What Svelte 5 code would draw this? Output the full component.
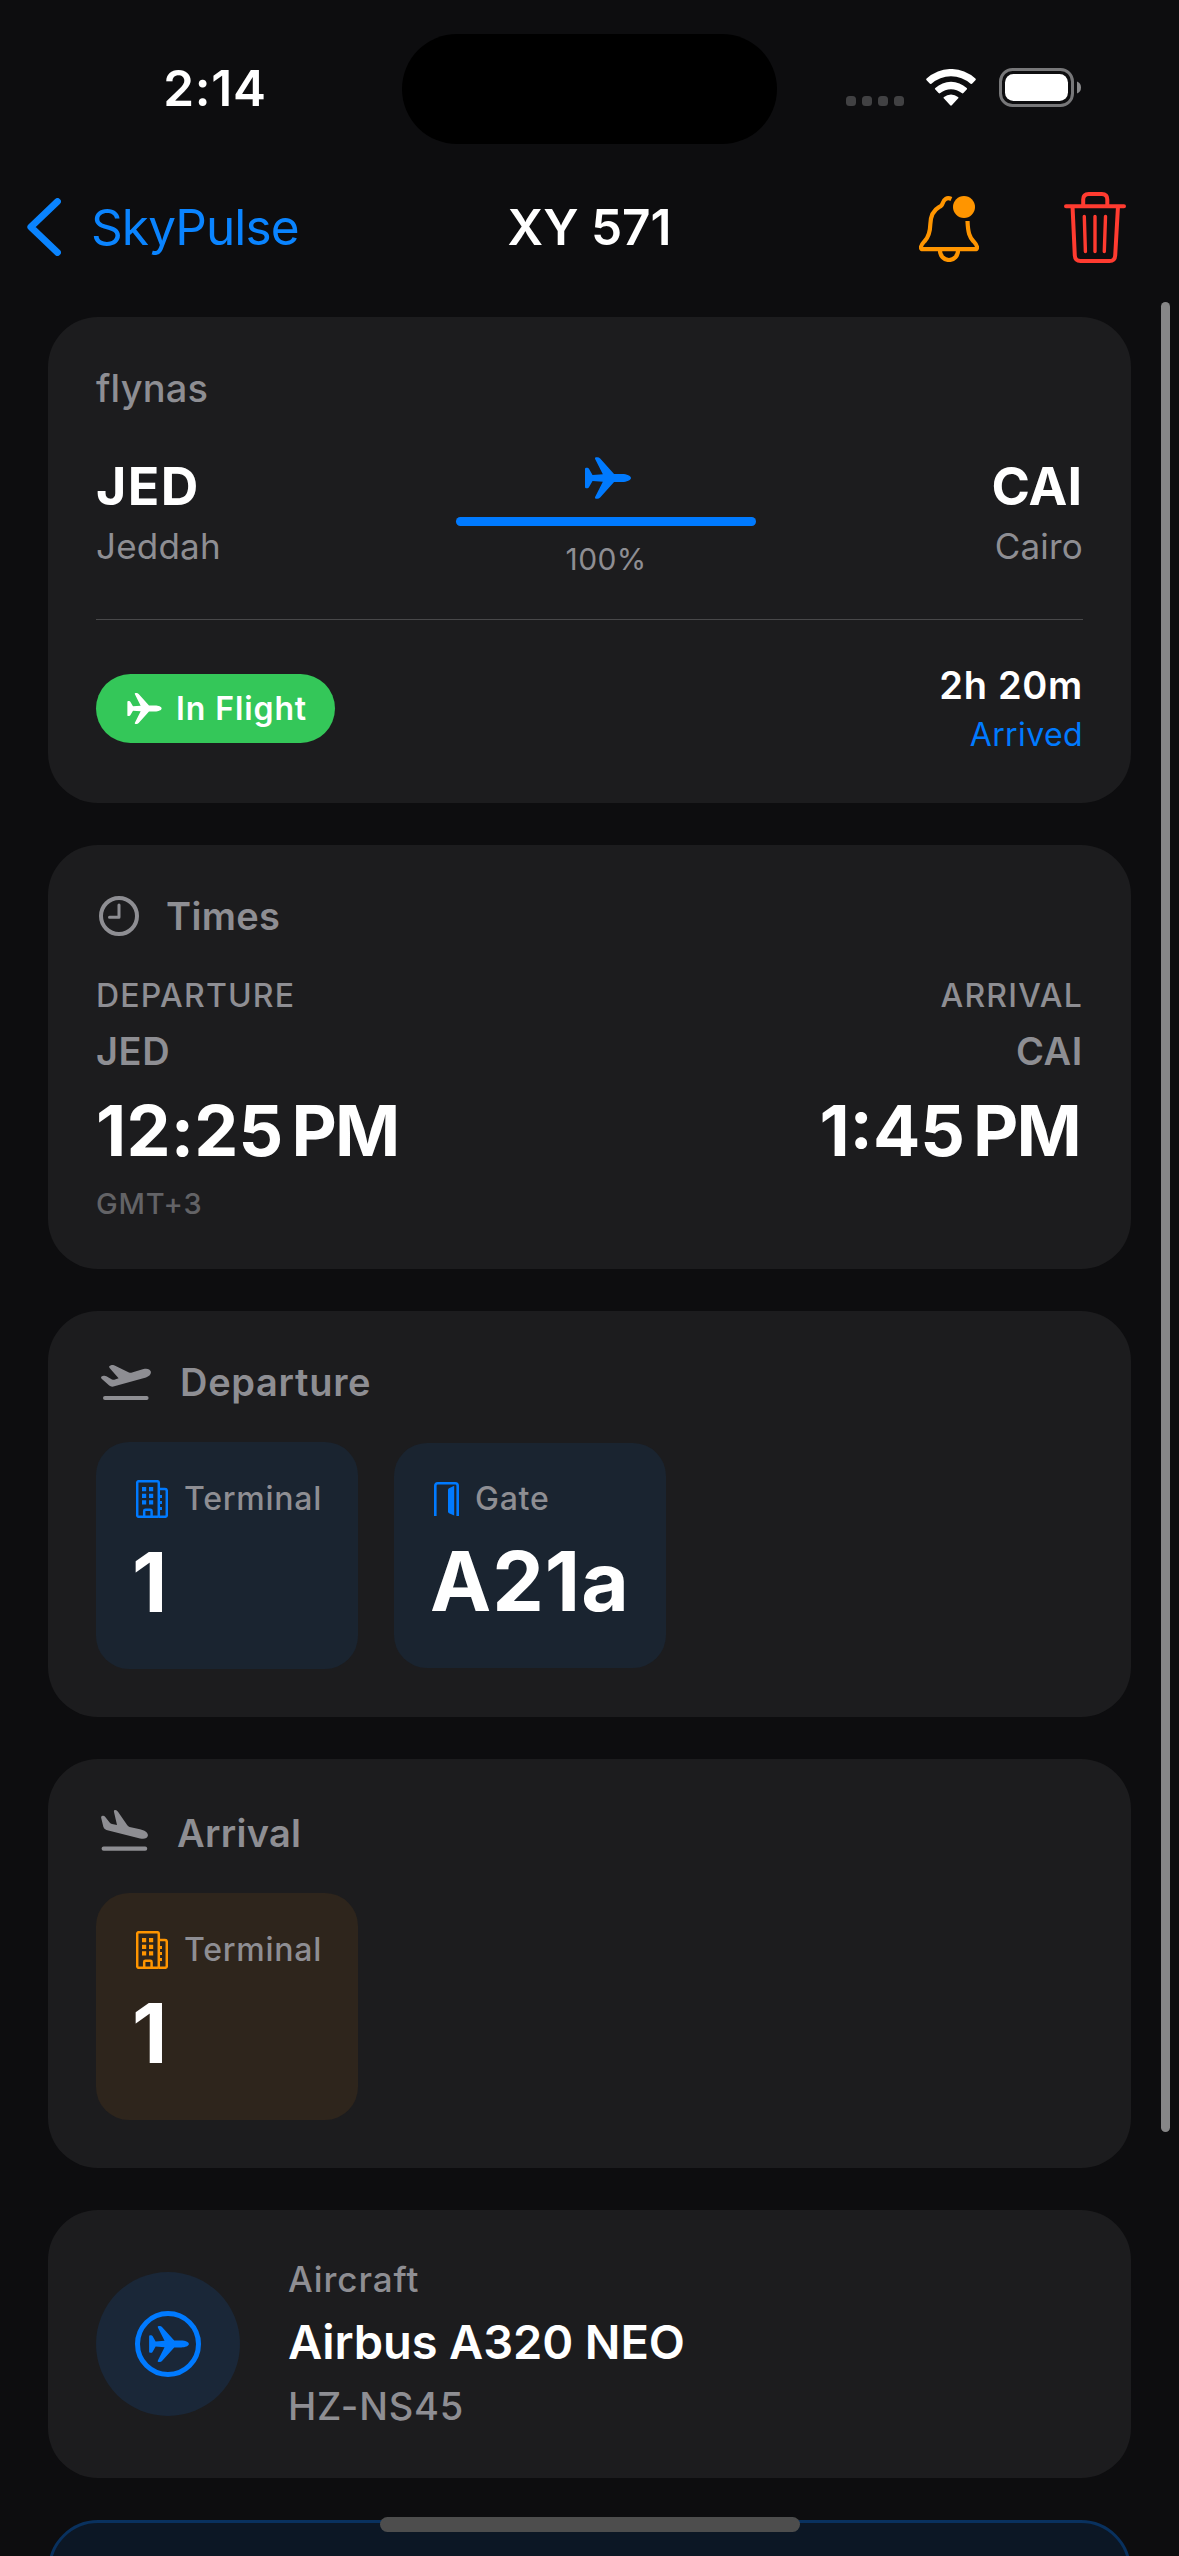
<script lang="ts">
  /**
   * Flight detail screen: route summary, times, terminals and aircraft
   */

  interface Tile {
    icon: 'building' | 'door';
    label: string;
    value: string;
  }

  const flight = {
    number: 'XY 571',
    airline: 'flynas',
    from: { code: 'JED', city: 'Jeddah' },
    to: { code: 'CAI', city: 'Cairo' },
    progress: 100,
    status: 'In Flight',
    duration: '2h 20m',
    note: 'Arrived'
  };

  const aircraft = { type: 'Airbus A320 NEO', registration: 'HZ-NS45' };

  const departureTiles: Tile[] = [
    { icon: 'building', label: 'Terminal', value: '1' },
    { icon: 'door', label: 'Gate', value: 'A21a' }
  ];

  const arrivalTiles: Tile[] = [{ icon: 'building', label: 'Terminal', value: '1' }];
</script>

{#snippet plane(cls: string)}
  <svg class={cls} viewBox="0 0 46.4 42" fill="currentColor" aria-hidden="true">
    <path
      d="M0 12Q0 10.7 1.2 10.7H2.4Q3.4 10.7 4 11.7L7.6 18L18 17.2L10.2 1.8Q9.4 0 11.2 0H12.4Q14 0 15.3 1.4L29.3 17H37.5C42 17 46.4 18.8 46.4 21S42 25 37.5 25H29.3L15.3 40.6Q14 42 12.4 42H11.2Q9.4 42 10.2 40.2L18 24.8L7.6 24L4 30.3Q3.4 31.3 2.4 31.3H1.2Q0 31.3 0 30Z"
    />
  </svg>
{/snippet}

{#snippet tile(item: Tile)}
  <div class="tile" class:gate={item.icon === 'door'}>
    <div class="tile-head">
      {#if item.icon === 'building'}
        <svg class="building" viewBox="0 0 32 38" fill="none" stroke="currentColor" stroke-width="2.5" aria-hidden="true">
          <rect x="1.2" y="1.2" width="21.6" height="35.6" rx="1.6" />
          <path d="M22.6 9H29Q30.8 9 30.8 11V35Q30.8 36.8 29 36.8H22.6M8.2 37V31Q8.2 29.8 9.4 29.8H14.4Q15.6 29.8 15.6 31V37" />
          <path
            fill="currentColor"
            stroke="none"
            d="M6 7h4.2v4.2H6zM13 7h4.2v4.2H13zM6 13.8h4.2V18H6zM13 13.8h4.2V18H13zM6 20.2h4.2v4.2H6zM13 20.2h4.2v4.2H13zM23 15h3v3h-3zM23 21h3v3h-3zM23 27h3v3h-3z"
          />
        </svg>
      {:else}
        <svg class="door" viewBox="0 0 25 34" aria-hidden="true">
          <path d="M1.3 34V3.8Q1.3 1.3 3.8 1.3H21.2Q23.7 1.3 23.7 3.8V34" fill="none" stroke="currentColor" stroke-width="2.6" />
          <path d="M14 8Q14 6.8 15 6.3L20.2 3.8V33.4L15 31.2Q14 30.7 14 29.5Z" fill="currentColor" />
        </svg>
      {/if}
      <span class="tile-label">{item.label}</span>
    </div>
    <div class="tile-value">{item.value}</div>
  </div>
{/snippet}

<div class="screen">
  <header class="status-bar">
    <div class="clock">2:14</div>
    <div class="island"></div>
    <div class="indicators">
      <div class="signal"><i></i><i></i><i></i><i></i></div>
      <svg class="wifi" viewBox="0 0 50 37" fill="#fff" aria-hidden="true">
        <path d="M.6 11.2Q-.3 10.3 .6 9.5A36 36 0 0 1 49.4 9.5Q50.3 10.3 49.4 11.2L46.3 14.6Q45.5 15.5 44.6 14.7A29.5 29.5 0 0 0 5.4 14.7Q4.5 15.5 3.7 14.6Z" />
        <path d="M9.3 20.5Q8.4 19.7 9.3 18.9A23.4 23.4 0 0 1 40.7 18.9Q41.6 19.7 40.7 20.5L37.4 24Q36.6 24.9 35.7 24.1A16.8 16.8 0 0 0 14.3 24.1Q13.4 24.9 12.6 24Z" />
        <path d="M18 29.6Q17.1 28.8 18 28.1A11 11 0 0 1 32 28.1Q32.9 28.8 32 29.6L25.8 36.3Q25 37.2 24.2 36.3Z" />
      </svg>
      <svg class="battery" viewBox="0 0 82 39" aria-hidden="true">
        <rect x="1.5" y="1.5" width="72" height="36" rx="12" fill="none" stroke="#777779" stroke-width="3" />
        <rect x="6" y="6" width="63" height="27" rx="8.5" fill="#fff" />
        <path d="M78 13.5Q82 15 82 19.5T78 25.5Z" fill="#8a8a8c" />
      </svg>
    </div>
  </header>

  <nav class="nav-bar">
    <button class="back">
      <svg class="chevron" viewBox="0 0 34 58" aria-hidden="true">
        <path d="M30.5 3.5L3.8 29L30.5 54.5" fill="none" stroke="currentColor" stroke-width="6.8" stroke-linecap="round" stroke-linejoin="round" />
      </svg>
      <span>SkyPulse</span>
    </button>
    <h1>{flight.number}</h1>
    <div class="actions">
      <button class="alerts" aria-label="Alerts">
        <svg viewBox="0 0 60 66" fill="none" stroke="currentColor" stroke-width="4.2" stroke-linejoin="round">
          <path
            d="M32.4 3C28 1 24.8 3 23.6 7.4C23.2 9.3 22 10.2 20 11.2C14 14.5 11.5 20 11.3 28.5C11.1 37 9.6 41 5.6 45.2C2.8 48.3 2 49.8 2 51.2Q2 53.2 4 53.2H56Q58 53.2 58 51.2C58 49.8 57.2 48.3 54.4 45.2C50.6 41.2 49 37 48.5 25"
          />
          <path d="M20.9 54C20.9 60 25 64 30 64S39.1 60 39.1 54" />
          <circle cx="45" cy="11" r="11" fill="currentColor" stroke="none" />
        </svg>
      </button>
      <button class="delete" aria-label="Delete">
        <svg viewBox="0 0 62 71" fill="none" stroke="currentColor" stroke-width="4" stroke-linecap="round">
          <path d="M2 14.2H60M19.2 13V7.5Q19.2 2 24.7 2H37.8Q43.3 2 43.3 7.5V13M8.6 16L10.8 63.5Q11.1 69 16.6 69H45.4Q50.9 69 51.2 63.5L53.9 16" />
          <path d="M20.3 24.5L21.4 59.5M31 24.5V59.5M41.5 24.5L40.3 59.5" stroke-width="3.4" />
        </svg>
      </button>
    </div>
  </nav>

  <main>
    <section class="card summary">
      <div class="airline">{flight.airline}</div>
      <div class="route">
        <div class="airport">
          <div class="code">{flight.from.code}</div>
          <div class="city">{flight.from.city}</div>
        </div>
        <div class="progress">
          {@render plane('plane-progress')}
          <div class="track">
            <div class="fill" style="width: {flight.progress}%"></div>
          </div>
          <div class="percent">{flight.progress}%</div>
        </div>
        <div class="airport end">
          <div class="code">{flight.to.code}</div>
          <div class="city">{flight.to.city}</div>
        </div>
      </div>
      <div class="state">
        <div class="pill">
          {@render plane('plane-pill')}
          <span>{flight.status}</span>
        </div>
        <div class="end">
          <div class="duration">{flight.duration}</div>
          <div class="note">{flight.note}</div>
        </div>
      </div>
    </section>

    <section class="card">
      <div class="card-head">
        <svg class="clock-icon" viewBox="0 0 40 40" fill="none" stroke="currentColor" aria-hidden="true">
          <circle cx="20" cy="20" r="18" stroke-width="4" />
          <path d="M20 9V21.3H10.5" stroke-width="3" stroke-linecap="round" stroke-linejoin="round" />
        </svg>
        <h2>Times</h2>
      </div>
      <div class="times">
        <div>
          <div class="when">DEPARTURE</div>
          <div class="where">JED</div>
          <div class="time">12:25<span>PM</span></div>
          <div class="zone">GMT+3</div>
        </div>
        <div class="end">
          <div class="when">ARRIVAL</div>
          <div class="where">CAI</div>
          <div class="time">1:45<span>PM</span></div>
        </div>
      </div>
    </section>

    <section class="card departure">
      <div class="card-head">
        <svg class="takeoff" viewBox="0 0 50 35" fill="currentColor" aria-hidden="true">
          <path
            d="M.6 13.7Q-.7 12 1 11.3L2.6 10.8Q4 10.5 5.4 11.2L11 14.4Q12.5 15.2 14 14.6L17.6 13.3L8.6 3Q7.4 1.4 9 .7L10.6 .1Q12 -.3 13.6 .4L28 7.4Q29.4 8 31 7.5L42.5 4.1C46 3.1 49.2 4.2 49.8 6.6C50.5 9.3 48 11.4 45 12.4L12.4 21.6Q10 22.2 8.2 20.6Z"
          />
          <rect x="2" y="31" width="45.6" height="4" rx="2" />
        </svg>
        <h2>Departure</h2>
      </div>
      <div class="tiles">
        {#each departureTiles as item (item.label)}
          {@render tile(item)}
        {/each}
      </div>
    </section>

    <section class="card arrival">
      <div class="card-head">
        <svg class="landing" viewBox="0 0 47 41" fill="currentColor" aria-hidden="true">
          <path
            d="M.2 8Q-.2 6 1.5 5.8L2.2 5.7Q3.3 5.7 4.3 7L8.6 12.4Q9.6 13.6 11 13.9L16 14.9L13 2Q12.6 .2 14 .1Q15.6 -.2 17 1.8L26.3 15.3Q27.2 16.6 28.6 16.9L39 19.2C43.5 20.2 47.3 22.6 46.9 25.6C46.4 28.6 43 29.3 39 28.4L5.4 19.9Q3 19.2 2.4 17Z"
          />
          <rect x=".6" y="36.6" width="45.6" height="4.2" rx="2" />
        </svg>
        <h2>Arrival</h2>
      </div>
      <div class="tiles">
        {#each arrivalTiles as item (item.label)}
          {@render tile(item)}
        {/each}
      </div>
    </section>

    <section class="card aircraft">
      <div class="badge">
        <div class="ring">{@render plane('plane-badge')}</div>
      </div>
      <div class="aircraft-text">
        <div class="kind">Aircraft</div>
        <div class="model">{aircraft.type}</div>
        <div class="registration">{aircraft.registration}</div>
      </div>
    </section>

    <section class="card next"></section>
  </main>

  <div class="scrollbar"></div>
  <div class="home-indicator"></div>
</div>

<style>
  :global(body) {
    background: #0d0d0f;
  }

  .screen {
    position: relative;
    width: 1179px;
    height: 2556px;
    overflow: hidden;
    background: #0d0d0f;
    color: #fff;
    font-family: Inter, Roboto, sans-serif;
    white-space: nowrap;
  }

  svg {
    display: block;
    flex: none;
  }

  button {
    display: flex;
    align-items: center;
    padding: 0;
    border: 0;
    background: none;
    font: inherit;
  }

  h1,
  h2 {
    margin: 0;
  }

  /* Status bar */
  .status-bar {
    display: grid;
    grid-template-columns: 402px 375px 1fr;
    height: 178px;
    padding-top: 34px;
    box-sizing: border-box;
  }

  .clock {
    margin-top: 24px;
    padding-left: 28px;
    text-align: center;
    font-size: 49.5px;
    line-height: 60px;
    font-weight: 600;
    letter-spacing: 0.8px;
  }

  .island {
    height: 110px;
    border-radius: 55px;
    background: #000;
  }

  .indicators {
    display: flex;
    padding: 34px 0 0 69px;
  }

  .signal {
    display: flex;
    gap: 6px;
    margin: 28px 22px 0 0;
  }

  .signal i {
    width: 10px;
    height: 10px;
    border-radius: 3.5px;
    background: #414143;
  }

  .wifi {
    width: 50px;
    height: 37px;
    margin: 1px 23px 0 0;
  }

  .battery {
    width: 82px;
    height: 39px;
  }

  /* Navigation */
  .nav-bar {
    display: grid;
    grid-template-columns: 1fr auto 1fr;
    align-items: center;
    height: 98px;
    padding: 0 53px 0 27px;
    font-size: 49.5px;
    line-height: 60px;
  }

  .back {
    gap: 30px;
    color: #0a84ff;
    letter-spacing: -0.9px;
  }

  .chevron {
    width: 34px;
    height: 58px;
  }

  h1 {
    font-size: inherit;
    font-weight: 600;
    margin-left: 26px;
  }

  .actions {
    display: flex;
    justify-content: flex-end;
    gap: 85px;
  }

  .alerts {
    color: #ff9500;
  }

  .alerts svg {
    width: 60px;
    height: 66px;
    margin-top: 4px;
  }

  .delete {
    color: #ff3b30;
  }

  .delete svg {
    width: 62px;
    height: 71px;
  }

  /* Cards */
  main {
    display: flex;
    flex-direction: column;
    gap: 42px;
    padding: 41px 48px 0;
  }

  .card {
    box-sizing: border-box;
    padding: 48px;
    border-radius: 50px;
    background: #1c1c1e;
  }

  .card-head {
    display: flex;
    align-items: center;
    height: 46px;
    color: #8e8e93;
  }

  h2 {
    font-size: 38px;
    line-height: 46px;
    font-weight: 580;
    letter-spacing: 0.3px;
  }

  .departure h2 {
    letter-spacing: 0.7px;
  }

  .end {
    text-align: right;
  }

  .summary {
    height: 486px;
  }

  .airline {
    font-size: 38px;
    line-height: 46px;
    font-weight: 500;
    letter-spacing: 0.2px;
    color: #8e8e93;
  }

  .route {
    display: flex;
    justify-content: space-between;
    height: 121px;
    margin-top: 45px;
    padding-bottom: 42px;
    border-bottom: 1px solid #48484a;
  }

  .code {
    margin-top: 1px;
    font-size: 52px;
    line-height: 60px;
    font-weight: 700;
    letter-spacing: 1.4px;
  }

  .end .code {
    letter-spacing: 0;
    padding-right: 1px;
  }

  .city {
    margin-top: 8px;
    font-size: 35px;
    line-height: 42px;
    font-weight: 430;
    letter-spacing: 0.2px;
    color: #8e8e93;
  }

  .progress {
    display: flex;
    flex-direction: column;
    align-items: center;
    width: 300px;
    padding-top: 1px;
  }

  .plane-progress {
    width: 46px;
    height: 42px;
    margin-left: 3px;
    color: #007aff;
  }

  .track {
    width: 100%;
    height: 9px;
    margin: 18px 0 15px;
    border-radius: 5px;
    background: #2c2c2e;
  }

  .fill {
    height: 100%;
    border-radius: inherit;
    background: #007aff;
  }

  .percent {
    font-size: 30px;
    line-height: 36px;
    letter-spacing: 0.4px;
    color: #8e8e93;
  }

  .state {
    display: flex;
    justify-content: space-between;
    align-items: center;
    margin-top: 42px;
  }

  .pill {
    display: flex;
    align-items: center;
    gap: 14px;
    width: 239px;
    height: 69px;
    padding-left: 31px;
    box-sizing: border-box;
    border-radius: 35px;
    background: #34c759;
    font-size: 32px;
    font-weight: 600;
    letter-spacing: 0.9px;
  }

  .plane-pill {
    width: 35px;
    height: 31px;
  }

  .pill span {
    margin-top: -1px;
  }

  .duration {
    font-size: 38px;
    line-height: 46px;
    font-weight: 600;
    letter-spacing: 0.7px;
  }

  .note {
    margin-top: 7px;
    font-size: 32px;
    line-height: 40px;
    letter-spacing: 0.4px;
    color: #007aff;
  }

  .clock-icon {
    width: 40px;
    height: 40px;
    margin: 0 27px 0 3px;
  }

  .times {
    display: flex;
    justify-content: space-between;
    margin-top: 37px;
    color: #8e8e93;
  }

  .when {
    font-size: 32px;
    line-height: 40px;
    font-weight: 480;
    letter-spacing: 1.2px;
  }

  .where {
    margin-top: 12px;
    font-size: 38px;
    line-height: 46px;
    font-weight: 600;
    letter-spacing: 0.6px;
  }

  .time {
    margin-top: 15px;
    font-size: 70px;
    line-height: 84px;
    font-weight: 700;
    letter-spacing: 0.2px;
    color: #fff;
  }

  .time span {
    margin-left: 8px;
    letter-spacing: -1.8px;
  }

  .end .time {
    padding-right: 3px;
    letter-spacing: 0;
  }

  .zone {
    margin-top: 13px;
    margin-bottom: -1px;
    font-size: 29px;
    line-height: 36px;
    font-weight: 500;
    letter-spacing: 0.8px;
    color: #636366;
  }

  /* Terminals and gates */
  .takeoff {
    width: 50px;
    height: 35px;
    margin: 0 29px 0 5px;
  }

  .landing {
    width: 47px;
    height: 41px;
    margin: 0 29px 3px 5px;
  }

  .arrival .card-head {
    height: 50px;
  }

  .arrival h2 {
    margin-top: 2px;
  }

  .tiles {
    display: flex;
    align-items: center;
    gap: 36px;
    margin-top: 37px;
    color: #007aff;
  }

  .arrival .tiles {
    margin-top: 36px;
    color: #ff9500;
  }

  .tile {
    box-sizing: border-box;
    width: 262px;
    height: 227px;
    padding: 36px;
    border-radius: 33px;
    background: #1a2430;
  }

  .arrival .tile {
    background: #2e251c;
  }

  .tile.gate {
    width: 272px;
    height: 225px;
    padding-top: 35px;
  }

  .tile-head {
    display: flex;
    align-items: center;
    height: 41px;
    padding-left: 4px;
  }

  .building {
    width: 32px;
    height: 38px;
    margin-right: 16px;
  }

  .door {
    width: 25px;
    height: 34px;
    margin-right: 16px;
  }

  .tile-label {
    font-size: 32px;
    line-height: 40px;
    font-weight: 500;
    letter-spacing: 0.75px;
    color: #8e8e93;
  }

  .tile-value {
    margin-top: 15px;
    font-size: 82px;
    line-height: 98px;
    font-weight: 700;
    letter-spacing: 0.8px;
    color: #fff;
  }

  .gate .tile-value {
    margin-top: 14px;
    letter-spacing: 1px;
  }

  /* Aircraft */
  .aircraft {
    display: flex;
    align-items: center;
    gap: 48px;
    height: 268px;
  }

  .badge {
    display: flex;
    align-items: center;
    justify-content: center;
    width: 144px;
    height: 144px;
    border-radius: 50%;
    background: #1a2738;
    color: #007aff;
  }

  .ring {
    display: flex;
    align-items: center;
    justify-content: center;
    box-sizing: border-box;
    width: 66px;
    height: 66px;
    border: 5.5px solid currentColor;
    border-radius: 50%;
  }

  .plane-badge {
    width: 40px;
    height: 36px;
    margin-left: 2px;
  }

  .aircraft-text {
    padding-bottom: 2px;
  }

  .kind {
    font-size: 35px;
    line-height: 43px;
    font-weight: 450;
    letter-spacing: 0.9px;
    color: #8e8e93;
  }

  .model {
    margin-top: 12px;
    font-size: 47px;
    line-height: 57px;
    font-weight: 590;
    letter-spacing: -0.1px;
  }

  .registration {
    margin-top: 13px;
    font-size: 38px;
    line-height: 46px;
    font-weight: 450;
    letter-spacing: 0.8px;
    color: #8e8e93;
  }

  .next {
    height: 268px;
    border: 3px solid #09315e;
    background: #0c1725;
  }

  /* Overlays */
  .scrollbar {
    position: absolute;
    top: 302px;
    right: 9px;
    width: 9px;
    height: 1830px;
    border-radius: 5px;
    background: #868687;
  }

  .home-indicator {
    position: absolute;
    left: 380px;
    bottom: 24px;
    width: 420px;
    height: 15px;
    border-radius: 8px;
    background: #4d4d4d;
  }
</style>
